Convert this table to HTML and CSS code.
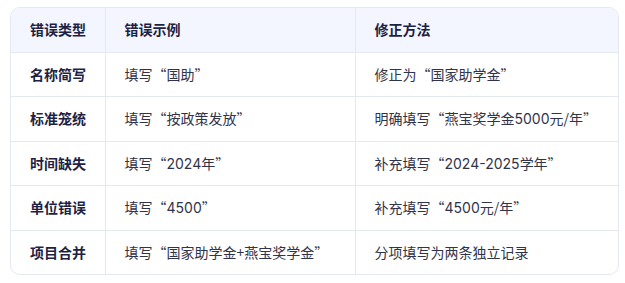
FILE: index.html
```html
<!DOCTYPE html>
<html lang="zh">
<head>
<meta charset="utf-8">
<link rel="stylesheet" href="styles.css">
</head>
<body>
<div class="wrap">
<table class="tbl">
<colgroup><col class="c1"><col class="c2"><col class="c3"></colgroup>
<thead>
<tr><th>错误类型</th><th>错误示例</th><th>修正方法</th></tr>
</thead>
<tbody>
<tr><td class="k">名称简写</td><td>填写“国助”</td><td>修正为“国家助学金”</td></tr>
<tr><td class="k">标准笼统</td><td>填写“按政策发放”</td><td>明确填写“燕宝奖学金<span class="num">5000</span>元/年”</td></tr>
<tr><td class="k">时间缺失</td><td>填写“<span class="num">2024</span>年”</td><td>补充填写“<span class="num">2024-2025</span>学年”</td></tr>
<tr><td class="k">单位错误</td><td>填写“<span class="num">4500</span>”</td><td>补充填写“<span class="num">4500</span>元/年”</td></tr>
<tr><td class="k">项目合并</td><td>填写“国家助学金+燕宝奖学金”</td><td>分项填写为两条独立记录</td></tr>
</tbody>
</table>
</div>
</body>
</html>
```
FILE: styles.css
```css
html, body { margin: 0; padding: 0; background: #fff; }
body { font-family: "Noto Sans CJK SC", "Noto Sans", sans-serif; }
.wrap {
  margin: 7px 6px 0 10px;
  border: 1px solid #e6e8f0;
  border-radius: 10px;
  overflow: hidden;
}
.tbl { width: 100%; border-collapse: collapse; table-layout: fixed; font-size: 14px; }
.c1 { width: 94px; }
.c2 { width: 250px; }
.tbl th, .tbl td {
  text-align: left;
  padding: 12px 19px 12px 19px;
  line-height: 19.5px;
  border-left: 1px solid #e6e8f0;
  border-top: 1px solid #e6e8f0;
  white-space: nowrap;
}
.tbl th:first-child, .tbl td:first-child { border-left: none; }
.tbl thead th { border-top: none; background: #f3f6fe; color: #1e1f45; font-weight: 700; }
.tbl td { color: #30344a; font-weight: 400; }
.tbl td.k { color: #1e1f45; font-weight: 700; }
.num { font-family: Inter, "Noto Sans", sans-serif; }
```
